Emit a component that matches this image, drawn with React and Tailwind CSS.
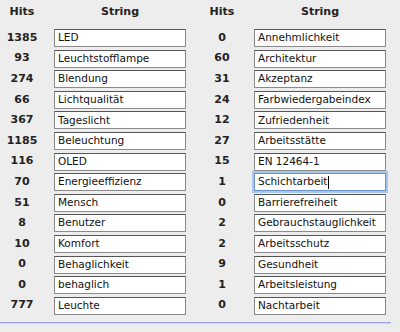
import React from "react";

const left = [
    ["1385", "LED"],
    ["93", "Leuchtstofflampe"],
    ["274", "Blendung"],
    ["66", "Lichtqualität"],
    ["367", "Tageslicht"],
    ["1185", "Beleuchtung"],
    ["116", "OLED"],
    ["70", "Energieeffizienz"],
    ["51", "Mensch"],
    ["8", "Benutzer"],
    ["10", "Komfort"],
    ["0", "Behaglichkeit"],
    ["0", "behaglich"],
    ["777", "Leuchte"],
];

const right = [
    ["0", "Annehmlichkeit"],
    ["60", "Architektur"],
    ["31", "Akzeptanz"],
    ["24", "Farbwiedergabeindex"],
    ["12", "Zufriedenheit"],
    ["27", "Arbeitsstätte"],
    ["15", "EN 12464-1"],
    ["1", "Schichtarbeit"],
    ["0", "Barrierefreiheit"],
    ["2", "Gebrauchstauglichkeit"],
    ["2", "Arbeitsschutz"],
    ["9", "Gesundheit"],
    ["1", "Arbeitsleistung"],
    ["0", "Nachtarbeit"],
];

const Column = ({ rows, focused }) => (
    <div className="w-[204px] flex flex-col">
        <div className="flex h-[29px] items-center pb-[4px] font-bold text-[11px] text-[#222]">
            <div className="w-[44px] text-center">Hits</div>
            <div className="w-[10px]" />
            <div className="w-[132px] text-center">String</div>
        </div>
        <div className="flex flex-col gap-[2.6px]">
            {rows.map(([hits, str], i) => (
                <div key={i} className="flex items-center h-[18px]">
                    <div className="w-[44px] text-center font-bold text-[11px] text-[#222]">
                        {hits}
                    </div>
                    <div className="w-[10px]" />
                    {focused === i ? (
                        <div className="w-[132px] h-[18px] bg-white border border-[#6b8fc7] shadow-[0_0_0_2px_#a9c8ee] flex items-center pl-[3px] text-[10.5px] text-[#111] whitespace-nowrap overflow-hidden">
                            {str}
                            <span className="w-px h-[13px] bg-black ml-px" />
                        </div>
                    ) : (
                        <div className="w-[132px] h-[18px] bg-white border border-[#8a8a8a] border-t-[#555] flex items-center pl-[3px] text-[10.5px] text-[#111] whitespace-nowrap overflow-hidden">
                            {str}
                        </div>
                    )}
                </div>
            ))}
        </div>
    </div>
);

export default function App() {
    return (
        <div
            className="w-[400px] h-[332px] bg-[#ededed] flex flex-col"
            style={{ fontFamily: '"DejaVu Sans", Verdana, sans-serif' }}
        >
            <div className="flex">
                <Column rows={left} />
                <Column rows={right} focused={7} />
            </div>
            <div className="mt-[7px] w-[391px] h-px bg-[#9f9fe6]" />
            <div className="w-[391px] h-px bg-[#d4d4f0]" />
        </div>
    );
}
